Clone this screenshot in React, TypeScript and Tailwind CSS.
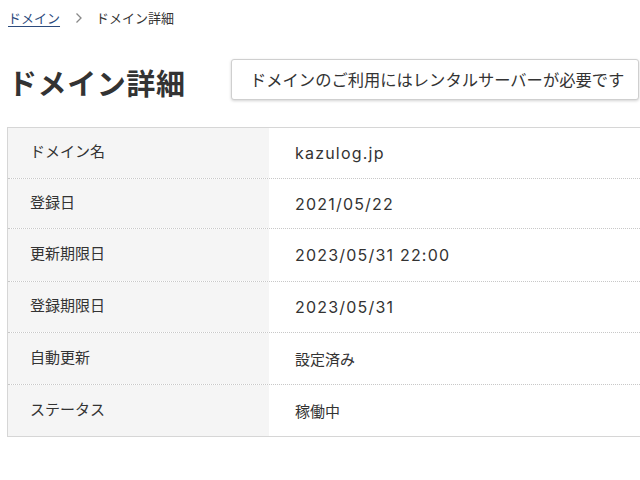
import React from "react";

const rows: { label: string; value: string; latin: boolean; h: string }[] = [
  { label: "ドメイン名", value: "kazulog.jp", latin: true, h: "h-[50px]" },
  { label: "登録日", value: "2021/05/22", latin: true, h: "h-[50px]" },
  { label: "更新期限日", value: "2023/05/31 22:00", latin: true, h: "h-[53px]" },
  { label: "登録期限日", value: "2023/05/31", latin: true, h: "h-[51px]" },
  { label: "自動更新", value: "設定済み", latin: false, h: "h-[52px]" },
  { label: "ステータス", value: "稼働中", latin: false, h: "h-[52px]" },
];

export default function App() {
  return (
    <div
      className="w-[640px] h-[480px] overflow-hidden bg-white text-[#333]"
      style={{ fontFamily: '"Noto Sans CJK JP", "Noto Sans", sans-serif' }}
    >
      <div className="flex items-center h-[34px] pl-[8px] text-[13px] leading-none pt-[1px]">
        <span className="text-[#2b4a7c] underline underline-offset-[3px] decoration-[#2b4a7c]">ドメイン</span>
        <svg className="ml-[15px] mr-[13px]" width="8" height="12" viewBox="0 0 8 12">
          <path d="M1.5 1.5 L6 6 L1.5 10.5" fill="none" stroke="#888" strokeWidth="1.3" />
        </svg>
        <span className="text-[#333]">ドメイン詳細</span>
      </div>
      <div className="flex items-center mt-[25px] h-[41px]">
        <div className="w-[231px] shrink-0 pl-[8px]">
          <h1 className="text-[29px] font-bold text-[#333] leading-none tracking-[0.02em] mt-[6px]">ドメイン詳細</h1>
        </div>
        <div className="w-[408px] h-[41px] flex items-center pl-[18px] border border-[#cfcfcf] rounded-[3px] bg-white shadow-[0_1px_3px_rgba(0,0,0,0.18)] text-[16.3px] text-[#333]">
          ドメインのご利用にはレンタルサーバーが必要です
        </div>
      </div>
      <div className="ml-[7px] mt-[27px] w-[650px] border border-[#d6d6d6]">
        {rows.map((r, i) => (
          <div
            key={r.label}
            className={`flex ${r.h} ${i > 0 ? "border-t border-dotted border-[#c8c8c8]" : ""}`}
          >
            <div className="w-[261px] bg-[#f5f5f5] flex items-center pl-[22px] text-[15px] pb-[3px]">
              {r.label}
            </div>
            <div
              className={`flex-1 flex items-center pl-[26px] ${
                r.latin ? "text-[16px] tracking-[0.075em]" : "text-[15px] pt-[2px]"
              }`}
              style={r.latin ? { fontFamily: '"Inter", "Noto Sans CJK JP", sans-serif' } : undefined}
            >
              {r.value}
            </div>
          </div>
        ))}
      </div>
    </div>
  );
}
